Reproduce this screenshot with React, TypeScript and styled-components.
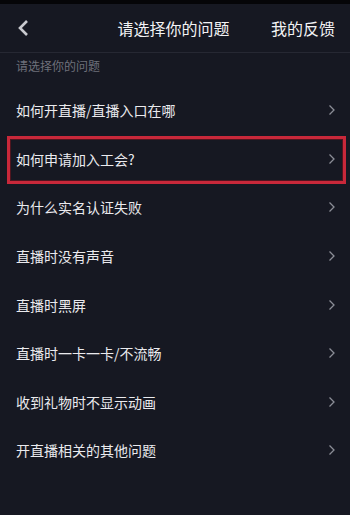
import React from "react";
import styled, { createGlobalStyle } from "styled-components";

const Global = createGlobalStyle`
  html, body { margin: 0; padding: 0; background: #161822; }
  body { font-family: "Noto Sans CJK SC", "Noto Sans", sans-serif; }
`;

const Page = styled.div`
  width: 350px;
  height: 515px;
  background: #161822;
  display: flex;
  flex-direction: column;
  overflow: hidden;
`;

const StatusStrip = styled.div`
  height: 4px;
  background: #050508;
`;

const Header = styled.div`
  height: 48px;
  display: flex;
  align-items: center;
  border-bottom: 1px solid #262833;
`;

const BackButton = styled.div`
  width: 50px;
  padding-left: 17px;
  display: flex;
  align-items: center;
  box-sizing: border-box;
`;

const Title = styled.div`
  flex: 1;
  text-align: center;
  color: #f2f2f4;
  font-size: 16px;
  padding-left: 26px;
`;

const HeaderAction = styled.div`
  color: #f2f2f4;
  font-size: 16px;
  padding-right: 15px;
`;

const Hint = styled.div`
  height: 33px;
  box-sizing: border-box;
  padding: 6px 0 0 16px;
  line-height: 14px;
  color: #6e707a;
  font-size: 12px;
`;

const List = styled.div`
  display: flex;
  flex-direction: column;
`;

const Row = styled.div`
  height: 48.6px;
  display: flex;
  align-items: center;
  justify-content: space-between;
  padding: 0 16px;
  box-sizing: border-box;
  position: relative;
  color: #eaeaee;
  font-size: 14px;
`;

const Highlight = styled.div`
  position: absolute;
  left: 7px;
  right: 4px;
  top: 1px;
  bottom: -1px;
  border: 3px solid #c8283a;
  box-shadow: inset 0 0 0 1px rgba(120, 20, 30, 0.6);
  pointer-events: none;
`;

const Chevron = () => (
  <svg width="8" height="12" viewBox="0 0 8 12" style={{ marginRight: -2 }}>
    <path d="M1.5 1.5 L6 6 L1.5 10.5" fill="none" stroke="#8b8d96" strokeWidth="1.3" />
  </svg>
);

const items = [
  "如何开直播/直播入口在哪",
  "如何申请加入工会?",
  "为什么实名认证失败",
  "直播时没有声音",
  "直播时黑屏",
  "直播时一卡一卡/不流畅",
  "收到礼物时不显示动画",
  "开直播相关的其他问题",
];

export default function App() {
  return (
    <>
      <Global />
      <Page>
        <StatusStrip />
        <Header>
          <BackButton>
            <svg width="12" height="18" viewBox="0 0 12 18">
              <path d="M10 2 L3 9 L10 16" fill="none" stroke="#c9cad0" strokeWidth="2.6" />
            </svg>
          </BackButton>
          <Title>请选择你的问题</Title>
          <HeaderAction>我的反馈</HeaderAction>
        </Header>
        <Hint>请选择你的问题</Hint>
        <List>
          {items.map((t, i) => (
            <Row key={t}>
              <span>{t}</span>
              <Chevron />
              {i === 1 && <Highlight />}
            </Row>
          ))}
        </List>
      </Page>
    </>
  );
}
